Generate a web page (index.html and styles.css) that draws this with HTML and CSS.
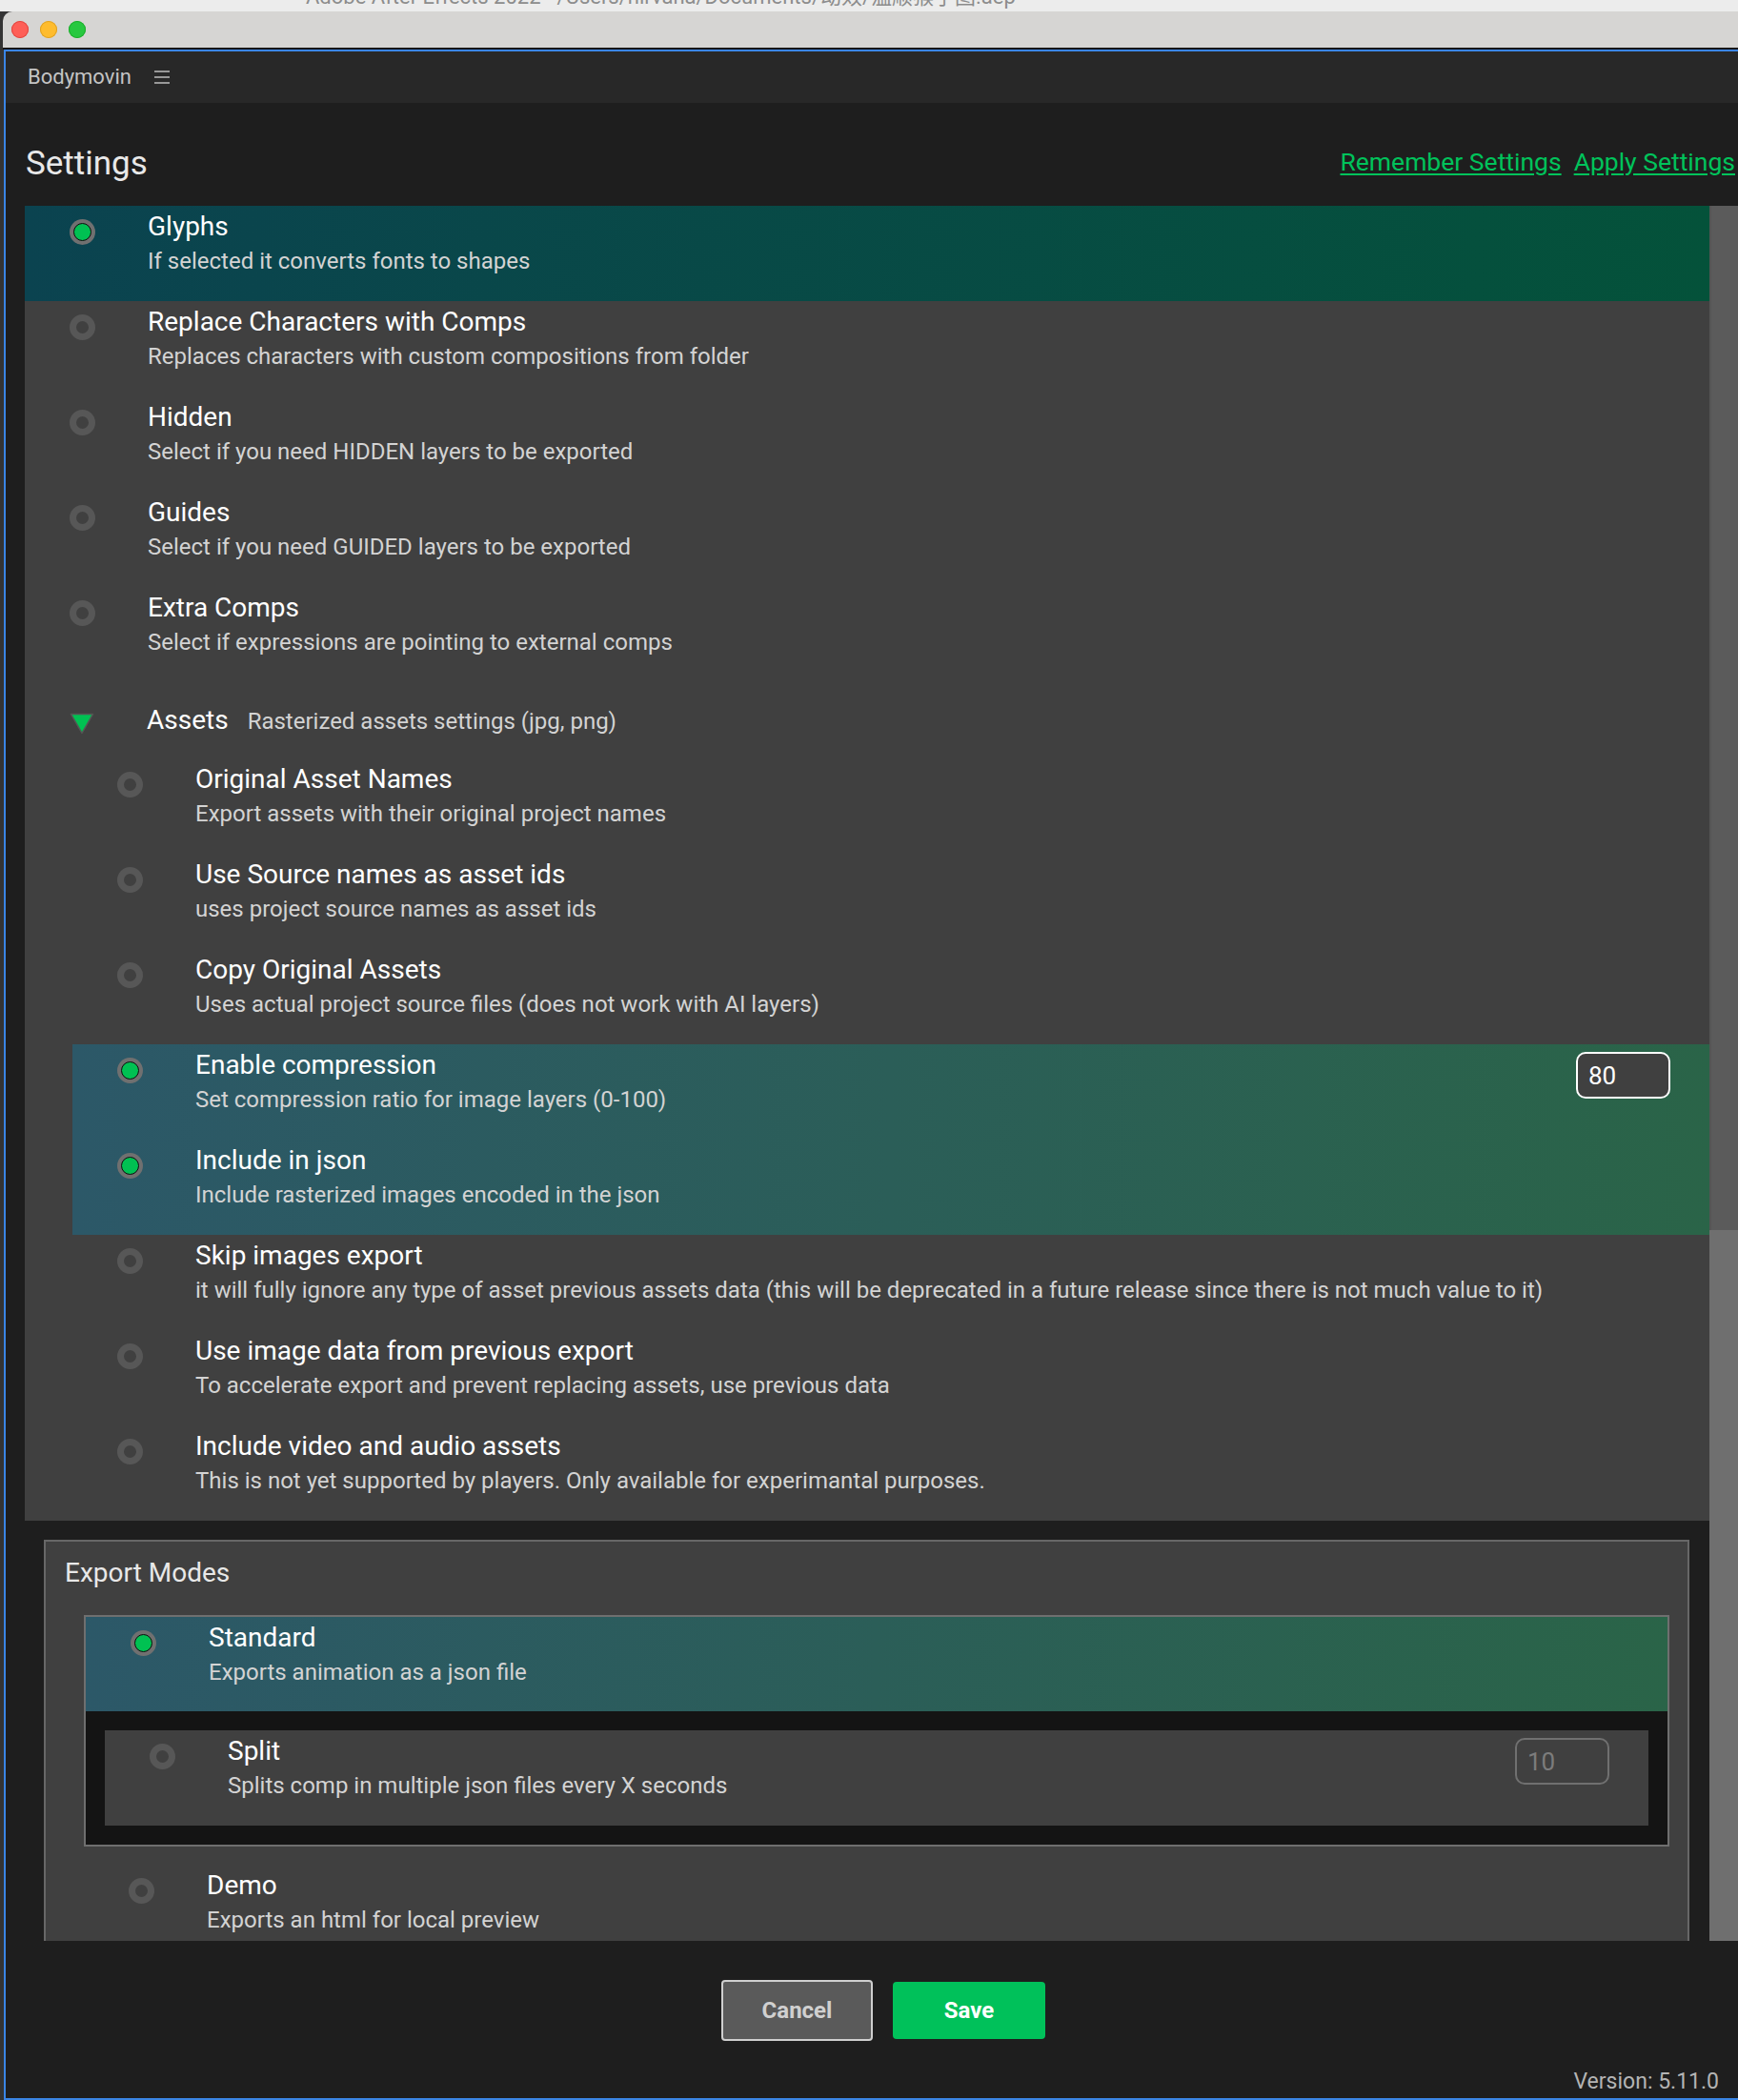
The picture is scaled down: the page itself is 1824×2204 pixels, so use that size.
FILE: index.html
```html
<!DOCTYPE html>
<html lang="en">
<head>
<meta charset="utf-8">
<title>Bodymovin</title>
<link rel="stylesheet" href="styles.css">
</head>
<body>
<div class="desk-strip"><span>Adobe After Effects 2022 - /Users/nirvana/Documents/动效/温顺猴子图.aep</span></div>
<div class="window">
  <div class="titlebar">
    <span class="tl tl-red"></span>
    <span class="tl tl-yellow"></span>
    <span class="tl tl-green"></span>
  </div>
  <div class="panel">
    <header class="panel-head">
      <span class="brand">Bodymovin</span>
      <svg class="menu-icon" width="16" height="16" viewBox="0 0 16 16" aria-hidden="true">
        <path d="M0 2h16M0 8h16M0 14h16" stroke="#bdbdbd" stroke-width="1.6" fill="none"/>
      </svg>
    </header>

    <div class="heading">
      <h1>Settings</h1>
      <div class="links">
        <a href="#">Remember Settings</a>
        <a href="#">Apply Settings</a>
      </div>
    </div>

    <div class="scroll-row">
      <div class="scroll-area">
        <section class="settings-list">
          <div class="opt sel-main">
            <span class="radio on"></span>
            <div class="opt-text">
              <div class="opt-title">Glyphs</div>
              <div class="opt-desc">If selected it converts fonts to shapes</div>
            </div>
          </div>
          <div class="opt">
            <span class="radio off"></span>
            <div class="opt-text">
              <div class="opt-title">Replace Characters with Comps</div>
              <div class="opt-desc">Replaces characters with custom compositions from folder</div>
            </div>
          </div>
          <div class="opt">
            <span class="radio off"></span>
            <div class="opt-text">
              <div class="opt-title">Hidden</div>
              <div class="opt-desc">Select if you need HIDDEN layers to be exported</div>
            </div>
          </div>
          <div class="opt">
            <span class="radio off"></span>
            <div class="opt-text">
              <div class="opt-title">Guides</div>
              <div class="opt-desc">Select if you need GUIDED layers to be exported</div>
            </div>
          </div>
          <div class="opt">
            <span class="radio off"></span>
            <div class="opt-text">
              <div class="opt-title">Extra Comps</div>
              <div class="opt-desc">Select if expressions are pointing to external comps</div>
            </div>
          </div>

          <div class="assets-head">
            <svg class="tri" width="26" height="23" viewBox="0 0 26 23" aria-hidden="true">
              <polygon points="1.5,1.5 24.5,1.5 13,21.5" fill="#00c152" stroke="#555" stroke-width="1.5" stroke-linejoin="round"/>
            </svg>
            <div class="assets-label">
              <span class="assets-title">Assets</span>
              <span class="assets-desc">Rasterized assets settings (jpg, png)</span>
            </div>
          </div>

          <div class="sub">
            <div class="opt">
              <span class="radio off"></span>
              <div class="opt-text">
                <div class="opt-title">Original Asset Names</div>
                <div class="opt-desc">Export assets with their original project names</div>
              </div>
            </div>
            <div class="opt">
              <span class="radio off"></span>
              <div class="opt-text">
                <div class="opt-title">Use Source names as asset ids</div>
                <div class="opt-desc">uses project source names as asset ids</div>
              </div>
            </div>
            <div class="opt">
              <span class="radio off"></span>
              <div class="opt-text">
                <div class="opt-title">Copy Original Assets</div>
                <div class="opt-desc">Uses actual project source files (does not work with AI layers)</div>
              </div>
            </div>
            <div class="sel-group">
              <div class="opt">
                <span class="radio on"></span>
                <div class="opt-text">
                  <div class="opt-title">Enable compression</div>
                  <div class="opt-desc">Set compression ratio for image layers (0-100)</div>
                </div>
                <input class="num" type="text" value="80">
              </div>
              <div class="opt">
                <span class="radio on"></span>
                <div class="opt-text">
                  <div class="opt-title">Include in json</div>
                  <div class="opt-desc">Include rasterized images encoded in the json</div>
                </div>
              </div>
            </div>
            <div class="opt">
              <span class="radio off"></span>
              <div class="opt-text">
                <div class="opt-title">Skip images export</div>
                <div class="opt-desc">it will fully ignore any type of asset previous assets data (this will be deprecated in a future release since there is not much value to it)</div>
              </div>
            </div>
            <div class="opt">
              <span class="radio off"></span>
              <div class="opt-text">
                <div class="opt-title">Use image data from previous export</div>
                <div class="opt-desc">To accelerate export and prevent replacing assets, use previous data</div>
              </div>
            </div>
            <div class="opt">
              <span class="radio off"></span>
              <div class="opt-text">
                <div class="opt-title">Include video and audio assets</div>
                <div class="opt-desc">This is not yet supported by players. Only available for experimantal purposes.</div>
              </div>
            </div>
          </div>
        </section>

        <section class="modes">
          <div class="modes-title">Export Modes</div>
          <div class="mode-list">
            <div class="mode-std">
              <div class="opt opt-std sel-group">
                <span class="radio on"></span>
                <div class="opt-text">
                  <div class="opt-title">Standard</div>
                  <div class="opt-desc">Exports animation as a json file</div>
                </div>
              </div>
              <div class="split-wrap">
                <div class="opt split">
                  <span class="radio off"></span>
                  <div class="opt-text">
                    <div class="opt-title">Split</div>
                    <div class="opt-desc">Splits comp in multiple json files every X seconds</div>
                  </div>
                  <input class="num num-off" type="text" value="10" disabled>
                </div>
              </div>
            </div>
            <div class="opt opt-demo">
              <span class="radio off"></span>
              <div class="opt-text">
                <div class="opt-title">Demo</div>
                <div class="opt-desc">Exports an html for local preview</div>
              </div>
            </div>
          </div>
        </section>
      </div>
      <div class="scrollbar">
        <div class="sb-track"></div>
        <div class="sb-thumb"></div>
      </div>
    </div>

    <footer class="footer">
      <div class="buttons">
        <button class="btn btn-cancel" type="button">Cancel</button>
        <button class="btn btn-save" type="button">Save</button>
      </div>
      <div class="version">Version: 5.11.0</div>
    </footer>
  </div>
</div>
</body>
</html>
```

FILE: styles.css
```css
* {
  box-sizing: border-box;
}

html,
body {
  margin: 0;
  padding: 0;
}

body {
  width: 1824px;
  height: 2204px;
  overflow: hidden;
  background: #343434;
  font-family: Roboto, "Liberation Sans", "Noto Sans CJK SC", sans-serif;
}

/* window title of the app behind, mostly off screen */
.desk-strip {
  height: 12px;
  background: #ececec;
  overflow: hidden;
  padding-left: 321px;
}

.desk-strip span {
  display: block;
  margin-top: -14px;
  font-size: 22px;
  line-height: 22px;
  color: #8c8c8c;
  white-space: nowrap;
}

.window {
  margin-left: 3px;
}

.titlebar {
  height: 40px;
  background: #d6d5d3;
  border-bottom: 2px solid #161616;
  border-top-left-radius: 10px;
  display: flex;
  align-items: center;
  gap: 12px;
  padding-left: 9px;
}

.tl {
  width: 18px;
  height: 18px;
  border-radius: 50%;
}

.tl-red {
  background: #fe5f57;
  box-shadow: inset 0 0 0 1px #e2463f;
}

.tl-yellow {
  background: #febc2e;
  box-shadow: inset 0 0 0 1px #dfa123;
}

.tl-green {
  background: #28c840;
  box-shadow: inset 0 0 0 1px #1dad2b;
}

.panel {
  margin-left: 1px;
  height: 2152px;
  border: 2px solid #3a85e5;
  border-right: none;
  background: #1e1e1e;
  display: flex;
  flex-direction: column;
}

.panel-head {
  flex: none;
  height: 54px;
  background: #282828;
  display: flex;
  align-items: center;
  padding-left: 23px;
}

.brand {
  font-size: 22px;
  line-height: 54px;
  color: #c4c4c4;
}

.menu-icon {
  margin-left: 24px;
}

.heading {
  flex: none;
  height: 108px;
  display: flex;
  justify-content: space-between;
  align-items: flex-start;
  padding: 43px 3px 0 21px;
}

.heading h1 {
  margin: 0;
  font-size: 35px;
  line-height: 42px;
  font-weight: 400;
  color: #e8e8e8;
}

.links {
  display: flex;
  gap: 13px;
  margin-top: -2px;
}

.links a {
  font-size: 26.5px;
  line-height: 42px;
  color: #00c35b;
  text-decoration: underline;
  text-underline-offset: 3px;
}

.scroll-row {
  flex: none;
  height: 1821px;
  display: flex;
}

.scroll-area {
  flex: 1;
  overflow: hidden;
  padding-left: 20px;
}

.scrollbar {
  flex: none;
  width: 30px;
  display: flex;
  flex-direction: column;
}

.sb-track {
  height: 1075px;
  background: #5b5b5b;
  border-left: 2px solid #555;
}

.sb-thumb {
  flex: 1;
  background: #6f6f6f;
}

/* option rows */
.settings-list {
  background: #404040;
}

.opt {
  display: flex;
  align-items: flex-start;
  height: 100px;
}

.radio {
  flex: none;
  width: 27px;
  height: 27px;
  border-radius: 50%;
  margin: 14px 55px 0 47px;
}

.radio.off {
  border: 7px solid #575757;
}

.radio.on {
  background: #707070;
  display: flex;
  align-items: center;
  justify-content: center;
}

.radio.on::after {
  content: "";
  width: 17px;
  height: 17px;
  border-radius: 50%;
  background: #00c152;
  border: 1.5px solid #0d0d0d;
}

.opt-text {
  padding-top: 4px;
}

.opt-title {
  font-size: 28px;
  line-height: 36px;
  color: #ffffff;
  white-space: nowrap;
}

.opt-desc {
  font-size: 24px;
  line-height: 36px;
  color: #d3d3d3;
  white-space: nowrap;
}

.sel-main {
  background: linear-gradient(90deg, #0b4350, #04523a);
}

.sel-group {
  background: linear-gradient(90deg, #2c5868, #2a6448);
}

.assets-head {
  display: flex;
  align-items: flex-start;
  height: 80px;
  padding-top: 22px;
}

.tri {
  flex: none;
  margin: 10px 55px 0 47px;
}

.assets-label {
  display: flex;
  align-items: baseline;
  gap: 20px;
}

.assets-title {
  font-size: 28px;
  line-height: 36px;
  color: #ffffff;
}

.assets-desc {
  font-size: 24px;
  color: #d3d3d3;
}

.sub {
  margin-left: 50px;
}

.num {
  flex: none;
  margin: 8px 41px 0 auto;
  width: 99px;
  height: 49px;
  padding: 0 0 0 11px;
  border: 2px solid #ffffff;
  border-radius: 10px;
  background: #404040;
  color: #ffffff;
  font-family: Roboto, "Liberation Sans", sans-serif;
  font-size: 26px;
  outline: none;
}

.num-off {
  border-color: #707070;
  color: #7c7c7c;
}

/* export modes */
.modes {
  margin: 20px 21px 0 20px;
  border: 2px solid #676767;
  background: #404040;
  padding: 15px 19px 0 20px;
}

.modes-title {
  font-size: 28px;
  line-height: 36px;
  color: #e8e8e8;
}

.mode-list {
  margin: 26px 0 0 20px;
}

.mode-std {
  border: 2px solid #6f6f6f;
}

.opt-std {
  height: 99px;
}

.split-wrap {
  background: #141414;
  padding: 20px;
}

.split {
  background: #404040;
}

.opt-demo {
  margin-top: 19px;
}

/* footer */
.footer {
  flex: 1;
  padding-top: 41px;
}

.buttons {
  display: flex;
  justify-content: center;
  align-items: center;
  gap: 21px;
  height: 64px;
  padding-left: 24px;
}

.btn {
  font-family: Roboto, "Liberation Sans", sans-serif;
  font-weight: 700;
  font-size: 24px;
  border-radius: 4px;
  cursor: pointer;
}

.btn-cancel {
  width: 159px;
  height: 64px;
  background: #5a5a5a;
  border: 2px solid #cfcfcf;
  color: #d0d0d0;
}

.btn-save {
  width: 160px;
  height: 60px;
  background: #00c15a;
  border: none;
  color: #ffffff;
}

.version {
  margin-top: 29px;
  padding-right: 20px;
  text-align: right;
  font-size: 23px;
  line-height: 28px;
  color: #b4b4b4;
}
```
